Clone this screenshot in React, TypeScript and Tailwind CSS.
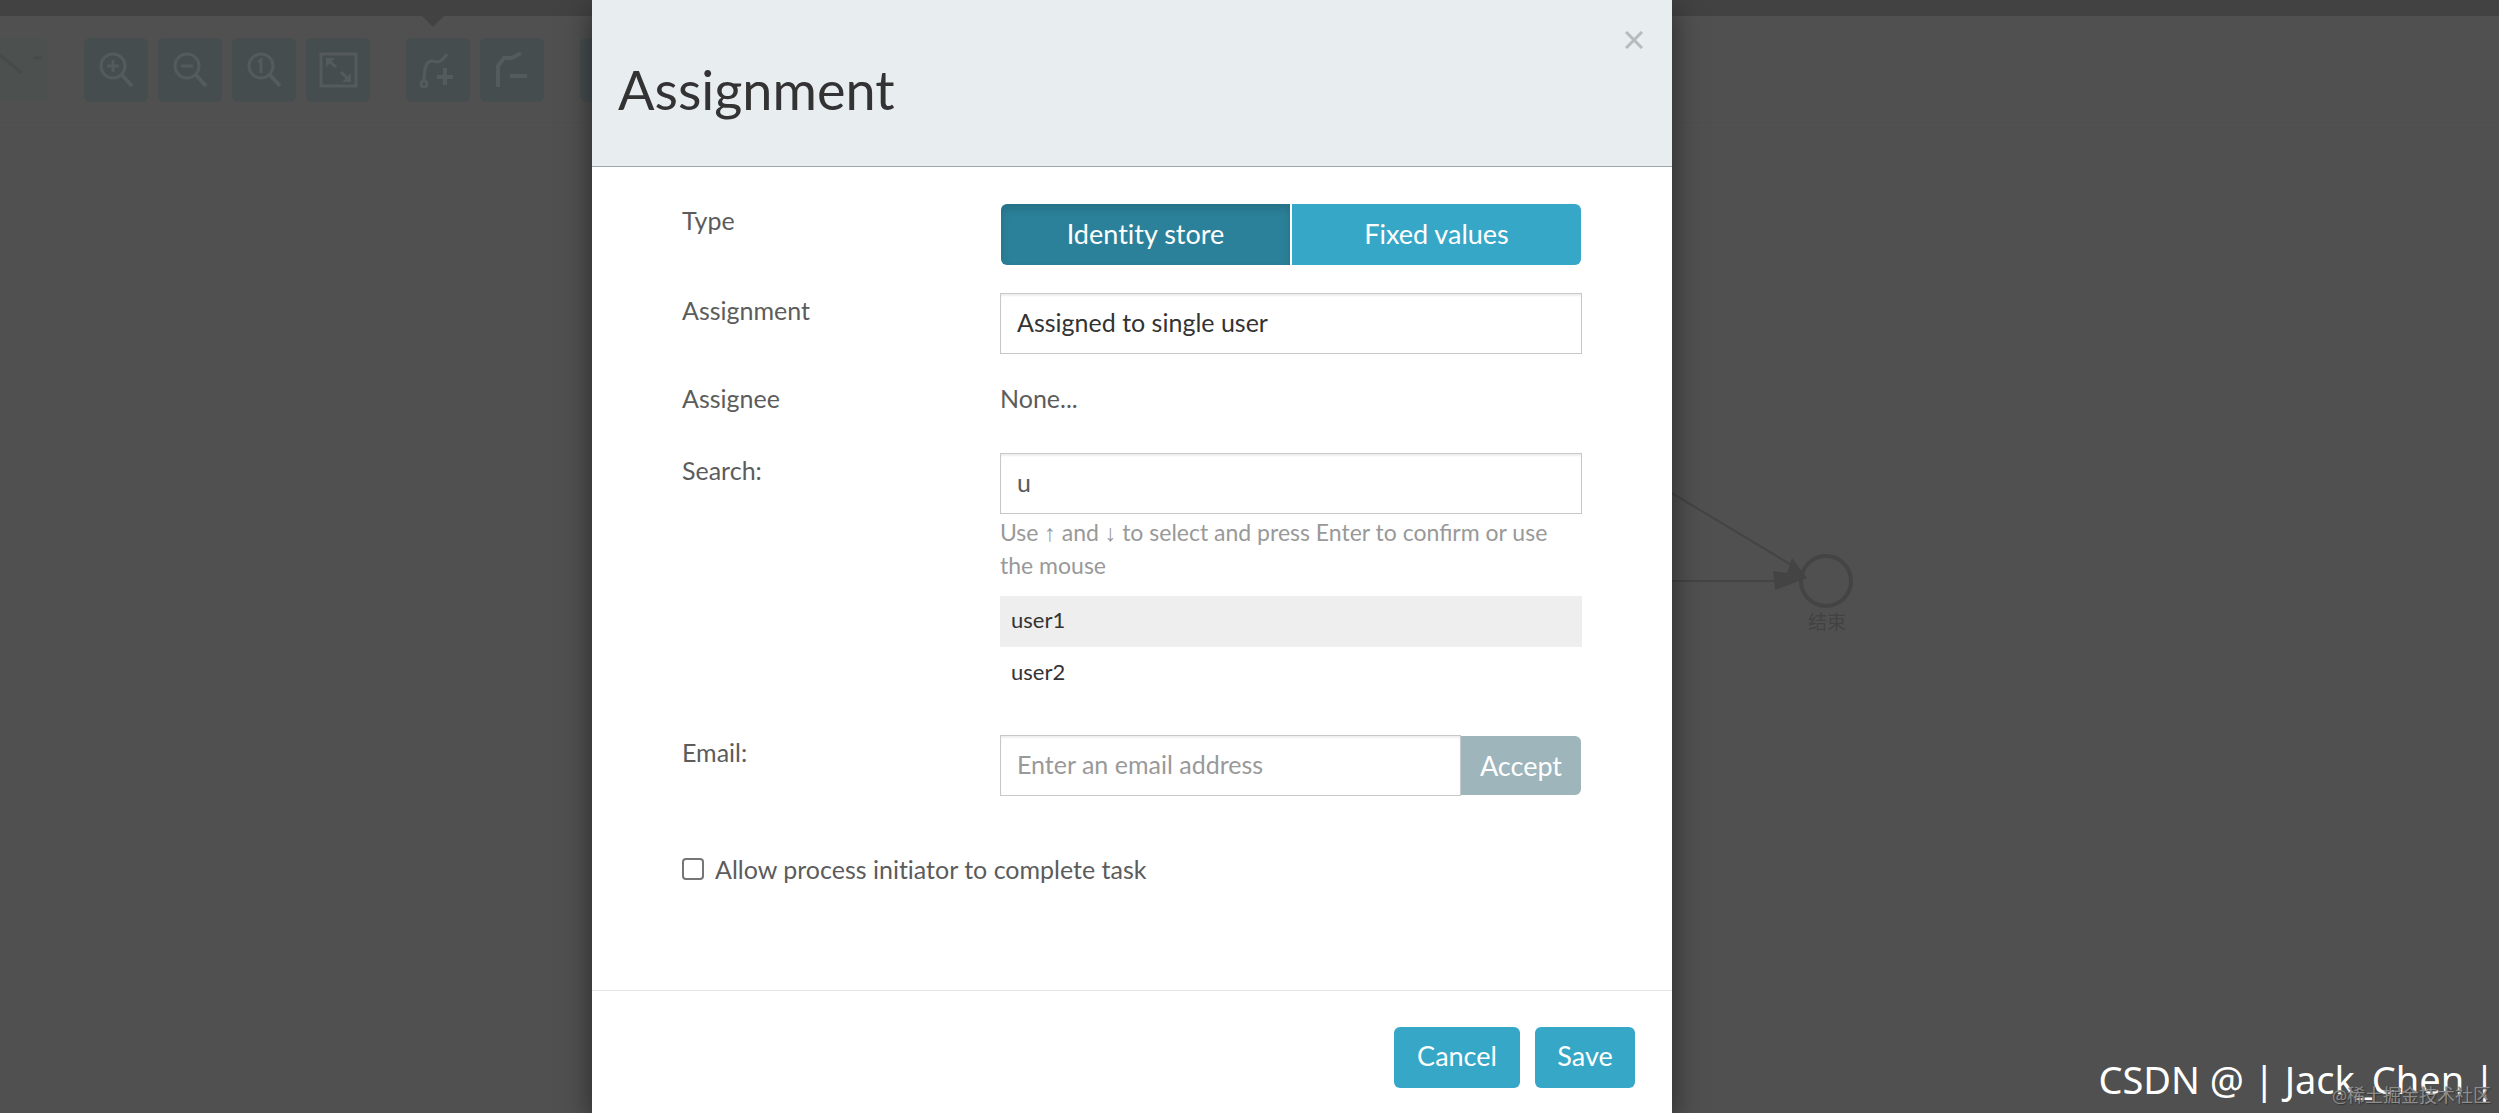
import { useState, type ReactNode } from "react";

const USERS = ["user1", "user2"];

function ToolIcon({ children }: { children: ReactNode }) {
  return (
    <svg
      viewBox="0 0 40 40"
      className="w-10 h-10"
      fill="none"
      stroke="currentColor"
      strokeWidth="3"
    >
      {children}
    </svg>
  );
}

function ToolButton({ label, children }: { label: string; children?: ReactNode }) {
  return (
    <button
      type="button"
      aria-label={label}
      className="w-16 h-16 shrink-0 rounded-md bg-[#464d4f] text-[#555b5c] grid place-items-center"
    >
      {children}
    </button>
  );
}

const magnifier = (
  <>
    <circle cx="17" cy="16" r="12" />
    <path d="M26 25l10 11" strokeWidth="4" />
  </>
);

function Toolbar() {
  return (
    <div className="flex gap-9 pt-[22px] pb-5 border-b border-[#4e4e4e]">
      <div className="w-12 h-16 rounded-r-md bg-[#4c504e] text-[#464a48]">
        <svg viewBox="0 0 48 64" className="w-12 h-16" fill="none" stroke="currentColor" strokeWidth="3">
          <path d="M0 17l22 18M34 20h8" />
        </svg>
      </div>
      <div className="flex gap-[10px]">
        <ToolButton label="Zoom in">
          <ToolIcon>
            {magnifier}
            <path d="M17 10v12M11 16h12" />
          </ToolIcon>
        </ToolButton>
        <ToolButton label="Zoom out">
          <ToolIcon>
            {magnifier}
            <path d="M11 16h12" />
          </ToolIcon>
        </ToolButton>
        <ToolButton label="Zoom to actual size">
          <ToolIcon>
            {magnifier}
            <path d="M14 12l3-2v13" />
          </ToolIcon>
        </ToolButton>
        <ToolButton label="Zoom to fit">
          <ToolIcon>
            <path d="M3 4h35v32H3z" />
            <path d="M8 17V8h9zM33 23v9h-9z" fill="currentColor" stroke="none" />
            <path d="M11 11l7 6M23 22l7 7" />
          </ToolIcon>
        </ToolButton>
      </div>
      <div className="flex gap-[10px]">
        <ToolButton label="Add bend-point">
          <ToolIcon>
            <path d="M6 32C6 18 8 11 14 11c5 0 6 5 15-7" />
            <circle cx="6" cy="34" r="3" />
            <path d="M27 18v17M19 27h16" strokeWidth="4" />
          </ToolIcon>
        </ToolButton>
        <ToolButton label="Remove bend-point">
          <ToolIcon>
            <path d="M6 37V16l6-8h8l9-5" strokeWidth="4" />
            <path d="M18 26h17" strokeWidth="4" />
          </ToolIcon>
        </ToolButton>
      </div>
      <ToolButton label="Help" />
    </div>
  );
}

function Canvas() {
  return (
    <>
      <svg
        viewBox="1600 440 300 200"
        className="absolute left-[1600px] top-[440px] w-[300px] h-[200px] text-[#444]"
        fill="none"
        stroke="currentColor"
      >
        <path d="M1600 450l195 117M1600 581h180" strokeWidth="2" />
        <path d="M1807 578l-15-20-5 15-14-2 2 19z" fill="currentColor" stroke="none" />
        <circle cx="1826" cy="581" r="25" strokeWidth="4" />
      </svg>
      <span
        lang="zh-CN"
        className="absolute left-[1808px] top-[608px] text-[19px] leading-7 text-[#424242]"
      >
        结束
      </span>
    </>
  );
}

export default function App() {
  const [type, setType] = useState("identity");
  const [selected, setSelected] = useState("user1");
  const [search, setSearch] = useState("u");
  const [email, setEmail] = useState("");
  const [allow, setAllow] = useState(false);

  const field =
    "w-full h-[61px] border border-[#c8c8c8] bg-white px-4 pb-[3px] text-[25px] shadow-[inset_0_2px_2px_rgba(0,0,0,0.07)] outline-none";
  const primary = "h-[61px] pb-1 rounded-md bg-[#36a7c6] text-white text-[27px]";

  return (
    <div className="relative min-h-screen overflow-hidden bg-[#505050] font-['Lato','Noto_Sans_CJK_SC',sans-serif]">
      {/* Editor */}
      <div className="absolute inset-0">
        <div className="relative h-4 bg-[#424242]">
          <svg viewBox="0 0 22 11" className="absolute left-[422px] top-4 w-[22px] h-[11px]">
            <path d="M0 0h22L11 11z" fill="#424242" />
          </svg>
        </div>
        <Toolbar />
        <Canvas />
      </div>

      {/* Dialog */}
      <div className="relative grid grid-cols-[592fr_1080fr_827fr]">
        <div
          role="dialog"
          aria-labelledby="dialog-title"
          className="col-start-2 min-h-screen flex flex-col bg-white text-[25px] leading-[34px] text-[#5c5c5c] shadow-[0_9px_27px_rgba(0,0,0,0.5)]"
        >
          <header className="h-[167px] flex items-start justify-between bg-[#e8edf0] border-b border-[#9fa6ad] pl-[26px] pr-7">
            <h2 id="dialog-title" className="pt-14 text-[54px] leading-[68px] text-[#333]">
              Assignment
            </h2>
            <button
              type="button"
              aria-label="Close"
              className="mt-6 w-5 h-8 grid place-items-center text-[#b7bbbd]"
            >
              <svg viewBox="0 0 18 18" className="w-[18px] h-[18px]" fill="none" stroke="currentColor" strokeWidth="3">
                <path d="M1 1l16 16M17 1L1 17" />
              </svg>
            </button>
          </header>

          <div className="flex-1 px-[90px] pt-9 [font-variant-ligatures:no-common-ligatures]">
            <div className="grid grid-cols-[318px_1fr] items-start">
              <span>Type</span>
              <div className="flex gap-[2px] px-px pt-px">
                <button
                  type="button"
                  aria-pressed={type === "identity"}
                  onClick={() => setType("identity")}
                  className={`flex-1 h-[61px] pb-[2px] rounded-l-md text-white text-[27px] ${
                    type === "identity"
                      ? "bg-[#2b8199] shadow-[inset_0_5px_9px_rgba(0,0,0,0.13)]"
                      : "bg-[#36a7c6]"
                  }`}
                >
                  Identity store
                </button>
                <button
                  type="button"
                  aria-pressed={type === "fixed"}
                  onClick={() => setType("fixed")}
                  className={`flex-1 h-[61px] pb-[2px] rounded-r-md text-white text-[27px] ${
                    type === "fixed"
                      ? "bg-[#2b8199] shadow-[inset_0_5px_9px_rgba(0,0,0,0.13)]"
                      : "bg-[#36a7c6]"
                  }`}
                >
                  Fixed values
                </button>
              </div>
            </div>

            <div className="mt-7 grid grid-cols-[318px_1fr] items-start">
              <label htmlFor="assignment">Assignment</label>
              <select id="assignment" className={`${field} appearance-none text-[#333]`}>
                <option>Assigned to single user</option>
              </select>
            </div>

            <div className="mt-[27px] grid grid-cols-[318px_1fr]">
              <span>Assignee</span>
              <span>None...</span>
            </div>

            <div className="mt-[38px] grid grid-cols-[318px_1fr] items-start">
              <label htmlFor="search">Search:</label>
              <div>
                <input
                  id="search"
                  value={search}
                  onChange={(e) => setSearch(e.target.value)}
                  className={field}
                />
                <p className="pt-[2px] text-[23px] leading-[33px] text-[#999] [font-variant-ligatures:normal]">
                  Use <span className="leading-none font-['Liberation_Serif',serif]">↑</span> and{" "}
                  <span className="leading-none font-['Liberation_Serif',serif]">↓</span> to select
                  and press Enter to confirm or use the mouse
                </p>
                <ul className="mt-[14px] text-[22px] text-[#333]">
                  {USERS.map((user) => (
                    <li key={user} className="h-[52px]">
                      <button
                        type="button"
                        onClick={() => setSelected(user)}
                        className={`w-full h-[51px] px-[11px] pb-[3px] text-left ${
                          selected === user ? "bg-[#eee]" : ""
                        }`}
                      >
                        {user}
                      </button>
                    </li>
                  ))}
                </ul>
              </div>
            </div>

            <div className="mt-[35px] grid grid-cols-[318px_1fr] items-start">
              <label htmlFor="email">Email:</label>
              <div className="flex items-center">
                <input
                  id="email"
                  type="email"
                  placeholder="Enter an email address"
                  value={email}
                  onChange={(e) => setEmail(e.target.value)}
                  className={`${field} flex-1 min-w-0 placeholder:text-[#999]`}
                />
                <button
                  type="button"
                  className="w-[120px] h-[59px] mr-px rounded-r-md bg-[#9db5bb] text-white text-[27px]"
                >
                  Accept
                </button>
              </div>
            </div>

            <label className="mt-14 flex w-fit items-center gap-[11px]">
              <input
                type="checkbox"
                checked={allow}
                onChange={(e) => setAllow(e.target.checked)}
                className="appearance-none w-[22px] h-[22px] rounded border-2 border-[#767676] bg-white checked:bg-[#36a7c6]"
              />
              Allow process initiator to complete task
            </label>
          </div>

          <footer className="flex justify-end gap-[15px] border-t border-[#e5e5e5] px-[37px] pt-9 pb-[25px]">
            <button type="button" className={`${primary} w-[126px]`}>
              Cancel
            </button>
            <button type="button" className={`${primary} w-[100px]`}>
              Save
            </button>
          </footer>
        </div>
      </div>

      {/* Watermarks */}
      <div className="absolute right-1 bottom-[6px] text-[38px] leading-[56px] text-white font-['Noto_Sans',sans-serif]">
        CSDN @ | Jack_Chen |
      </div>
      <div
        lang="zh-CN"
        className="absolute right-2 bottom-2 text-[18px] leading-5 text-[#8d8d8d] [text-shadow:1px_1px_1px_#333]"
      >
        @稀土掘金技术社区
      </div>
    </div>
  );
}
